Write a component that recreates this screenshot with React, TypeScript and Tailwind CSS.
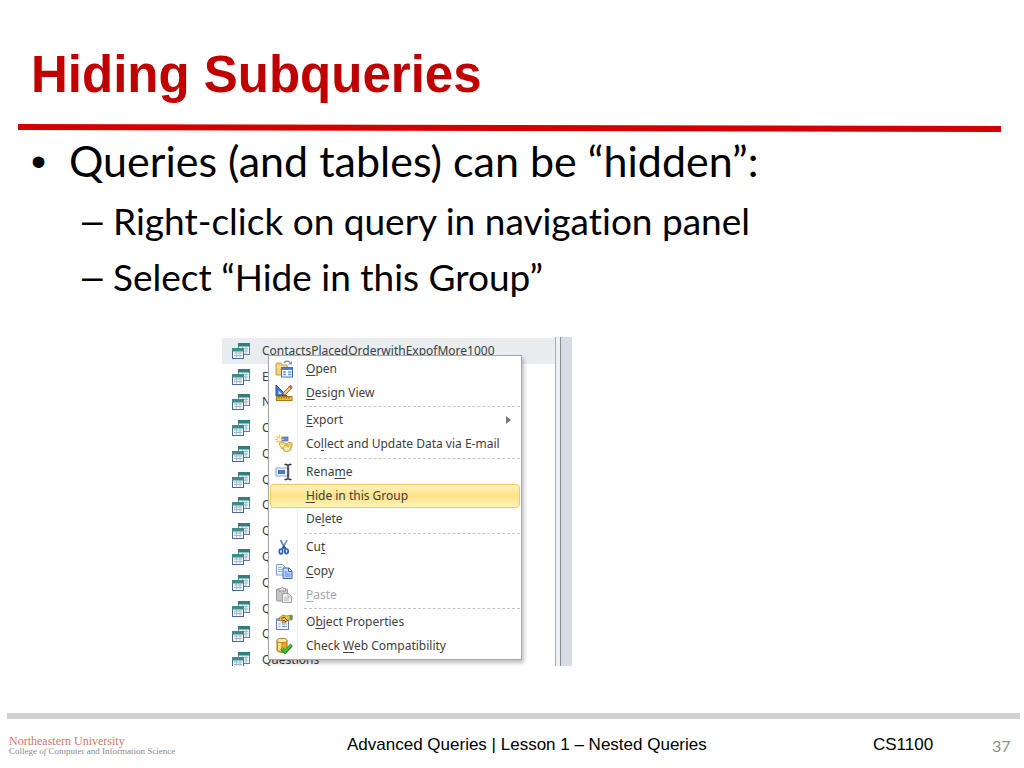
import type { ReactNode } from "react";

const TableIcon = () => (
  <svg viewBox="0 0 18 18" className="h-[18px] w-[18px] shrink-0">
    <rect x="6.500" y="1.500" width="11" height="11" fill="#eef4fa" stroke="#6482a8" />
    <path d="M8 6.500h8M8 9h8M10.500 5v7M14 5v7" stroke="#a3b8d2" />
    <rect x="6" y="1" width="12" height="3.500" fill="#2f807c" />
    <rect x="0.500" y="6.500" width="11" height="10" fill="#f4f8fc" stroke="#48699a" />
    <path d="M2 11h8M2 13.500h8M4.500 9.500v6M8 9.500v6" stroke="#a3b8d2" />
    <rect x="0" y="6" width="12" height="3.500" fill="#3d8d87" />
  </svg>
);

const OpenIcon = () => (
  <>
    <path d="M1 15V4l1-1h4l1.500 2H12v10z" fill="#f0d27c" stroke="#c39b3f" />
    <path d="M2 7h9" stroke="#fbeebb" />
    <path d="M9 3c1.500-2 4-2.500 6-.5" fill="none" stroke="#7d95b0" strokeWidth="1.300" />
    <path d="M13 4.500h4V1z" fill="#8198b2" />
    <rect x="6.500" y="7.500" width="11" height="9.500" fill="#fff" stroke="#3f6fc2" />
    <rect x="7" y="8" width="10" height="2" fill="#4b82d8" />
    <path d="M8 12h3M8 14.500h3M13 12h3.500M13 14.500h3.500" stroke="#6b97dc" strokeWidth="1.500" />
  </>
);

const DesignIcon = () => (
  <>
    <path d="M1 1v11h11z" fill="#3f76d6" stroke="#2452ad" />
    <path d="M3.500 6.500v3.500H7z" fill="#dce9fb" />
    <rect x="1.500" y="12.500" width="15.500" height="4" fill="#f1b934" stroke="#a87617" />
    <path d="M4 13v1.500M6.500 13v1.500M9 13v1.500M11.500 13v1.500M14 13v1.500" stroke="#7a5510" />
    <path d="M7.500 11.500l1-3 6-6 2 2-6 6z" fill="#f3c860" stroke="#74583a" strokeWidth=".8" />
    <path d="M14 2.500l1-1 2 1v1l-1 1z" fill="#d06562" stroke="#9c403e" strokeWidth=".7" />
    <path d="M7 12l.7-2 1.500 1.300z" fill="#3a3330" />
  </>
);

const CollectIcon = () => (
  <>
    <rect x="7" y="2" width="6" height="4" fill="#6890d2" stroke="#4468ad" strokeWidth=".7" />
    <path d="M4.500 0v9M0 4.500h9M1.500 1.500l6 6M7.500 1.500l-6 6" stroke="#edc64f" strokeWidth="1.200" />
    <circle cx="4.500" cy="4.500" r="1.700" fill="#fff7cf" />
    <path d="M4 9l3-2 5 2-1 4-4 1z" fill="#f4dc87" stroke="#bd993f" strokeWidth=".8" />
    <path d="M8 12l4-3 4 2v4l-4 2-3-1z" fill="#f6df91" stroke="#bd993f" strokeWidth=".8" />
    <path d="M11 10l3-3 3 1v4l-2 1z" fill="#edcb67" stroke="#bd993f" strokeWidth=".8" />
    <path d="M5 10l4 1M9.500 13l3 1 3-2" stroke="#fff7d5" fill="none" />
  </>
);

const RenameIcon = () => (
  <>
    <rect x="1" y="5" width="13" height="8" fill="#e9f1fc" stroke="#89a7d5" />
    <rect x="3" y="7" width="7" height="4" fill="#4778ca" />
    <path d="M9.500 1.500h2l1.500 1 1.500-1h2M13 2.500v13M9.500 16.500h2l1.500-1 1.500 1h2" fill="none" stroke="#303030" strokeWidth="1.500" />
  </>
);

const CutIcon = () => (
  <>
    <path d="M5.500 2l5 9.500" stroke="#6889b8" strokeWidth="1.800" />
    <path d="M12 2L7 11.500" stroke="#8397b3" strokeWidth="1.800" />
    <ellipse cx="6" cy="13.500" rx="1.700" ry="2.300" fill="none" stroke="#2860bd" strokeWidth="1.700" />
    <ellipse cx="11.500" cy="13.300" rx="1.700" ry="2.300" fill="none" stroke="#2860bd" strokeWidth="1.700" />
    <path d="M7.500 10.500l1.500-2 1.500 2" fill="none" stroke="#2b5098" strokeWidth="1.700" />
  </>
);

const CopyIcon = () => (
  <>
    <path d="M1.500 2.500h6l2.500 2.500v8H1.500z" fill="#edf4ff" stroke="#82a1d2" />
    <path d="M3 5.500h4M3 7.500h4M3 9.500h4" stroke="#9fb9df" />
    <path d="M8 6h6l3 3v7.500H8z" fill="#c8dcf9" stroke="#3868b8" />
    <path d="M13.500 6v3.500H17" fill="#fff" stroke="#3868b8" />
    <path d="M9.500 10h3M9.500 12h6M9.500 14h6" stroke="#5585d0" />
  </>
);

const PasteIcon = () => (
  <>
    <rect x="1.500" y="3" width="11" height="12" rx="1" fill="#c5c5c5" stroke="#9b9b9b" />
    <path d="M4 5V2.500h2c0-2 2.500-2 2.500 0h2V5z" fill="#e2e2e2" stroke="#999" />
    <path d="M7.500 7.500h6l3 3v6h-9z" fill="#efefef" stroke="#a0a0a0" />
    <path d="M13 7.500v3.500h3.500M9 12h5M9 14h5" fill="none" stroke="#b4b4b4" />
  </>
);

const PropertiesIcon = () => (
  <>
    <rect x="1.500" y="6" width="12" height="10.500" fill="#f1f6fd" stroke="#647fae" />
    <rect x="1.500" y="5.500" width="12" height="2.500" fill="#7d9ed2" />
    <path d="M3.500 11h2M7 11h5M3.500 13.500h2M7 13.500h5" stroke="#839cc4" />
    <path d="M4 5l4-3 3 1 6-1v5h-4l-3 3-1-1-2 1 1-3-3 1z" fill="#efc84d" stroke="#977329" strokeWidth=".8" />
    <path d="M6 6l3-2 4 4M8 8l1-1 2 2" fill="none" stroke="#4d422c" />
    <path d="M14.500 2.500h3v4h-3z" fill="#5d9661" />
  </>
);

const CompatIcon = () => (
  <>
    <path d="M2 3.500v9.500c0 3 10 3 10 0V3.500z" fill="#e7a52e" stroke="#a66b19" />
    <path d="M3 5v8c1 1 2 1 3 1.200V5z" fill="#ffe17d" />
    <ellipse cx="7" cy="3.500" rx="5" ry="2.200" fill="#ffe993" stroke="#b67b22" />
    <path d="M6.500 11.500l3.500 3.500 6.500-7" fill="none" stroke="#168020" strokeWidth="3.500" />
    <path d="M6.500 11l3.500 3.500 6.500-7" fill="none" stroke="#4fbe3e" strokeWidth="2" />
  </>
);

type Item = {
  before?: string;
  hot: string;
  after: string;
  icon?: ReactNode;
  submenu?: boolean;
  active?: boolean;
  disabled?: boolean;
};

const groups: Item[][] = [
  [
    { hot: "O", after: "pen", icon: <OpenIcon /> },
    { hot: "D", after: "esign View", icon: <DesignIcon /> },
  ],
  [
    { hot: "E", after: "xport", submenu: true },
    { before: "Co", hot: "l", after: "lect and Update Data via E-mail", icon: <CollectIcon /> },
  ],
  [
    { before: "Rena", hot: "m", after: "e", icon: <RenameIcon /> },
    { hot: "H", after: "ide in this Group", active: true },
    { before: "De", hot: "l", after: "ete" },
  ],
  [
    { before: "Cu", hot: "t", after: "", icon: <CutIcon /> },
    { hot: "C", after: "opy", icon: <CopyIcon /> },
    { hot: "P", after: "aste", icon: <PasteIcon />, disabled: true },
  ],
  [
    { before: "O", hot: "b", after: "ject Properties", icon: <PropertiesIcon /> },
    { before: "Check ", hot: "W", after: "eb Compatibility", icon: <CompatIcon /> },
  ],
];

const queries = [
  "ContactsPlacedOrderwithExpofMore1000",
  "E", "N", "C", "Q", "Q", "Q", "Q", "Q", "Q", "Q", "Q",
  "Questions",
];

function MenuItem({ item }: { item: Item }) {
  return (
    <button
      type="button"
      role="menuitem"
      disabled={item.disabled}
      className={`flex min-h-0 w-full flex-1 items-center rounded-sm border text-left ${
        item.active
          ? "border-[#efcb58] bg-linear-to-b from-[#fff3bd] via-[#fde184] to-[#fff4bd]"
          : "border-transparent"
      } ${item.disabled ? "text-[#a8a8a8]" : "text-[#404040]"}`}
    >
      <span className="flex w-[35px] shrink-0 pl-1">
        {item.icon && (
          <svg viewBox="0 0 18 18" className="h-[18px] w-[18px]">{item.icon}</svg>
        )}
      </span>
      <span className="flex-1 whitespace-pre">
        {item.before}
        <span className="underline underline-offset-2">{item.hot}</span>
        {item.after}
      </span>
      {item.submenu && (
        <svg viewBox="0 0 5 8" className="mr-2 h-2 w-[5px]">
          <path d="M0 0l5 4-5 4z" fill="#777" />
        </svg>
      )}
    </button>
  );
}

function ContextMenu() {
  return (
    <div
      role="menu"
      className="absolute top-[18px] left-[46px] flex h-[305px] w-[254px] flex-col border border-[#a5a8ad] bg-white bg-linear-to-r from-transparent from-[28px] via-[#dfe2e5] via-[28px] to-transparent to-[29px] p-px shadow-[2px_3px_4px_rgba(0,0,0,0.25)]"
    >
      {groups.map((group, i) => (
        <div key={i} className="contents">
          {i > 0 && (
            <div role="separator" className="flex h-1 shrink-0 items-center pl-[34px]">
              <div className="w-full border-t border-dashed border-[#c4c6c8]" />
            </div>
          )}
          {group.map((item) => (
            <MenuItem key={item.hot + item.after} item={item} />
          ))}
        </div>
      ))}
    </div>
  );
}

function NavigationPane() {
  return (
    <div className="relative ml-[222px] flex h-[329px] w-[350px] overflow-hidden font-['Noto_Sans',sans-serif] text-[12px] leading-4 text-[#404040]">
      <ul className="flex h-[336px] flex-1 flex-col pt-px">
        {queries.map((name, i) => (
          <li
            key={i}
            className={`flex min-h-0 flex-1 items-center gap-3 pl-[10px] ${i === 0 ? "bg-[#e9edf0]" : ""}`}
          >
            <TableIcon />
            <span>{name}</span>
          </li>
        ))}
      </ul>
      <div className="w-[6px] border-x border-l-[#a5adb5] border-r-[#848e98] bg-[#eef1f4]" />
      <div className="w-[11px] bg-[#d8dde3]" />
      <ContextMenu />
    </div>
  );
}

export default function App() {
  return (
    <main className="flex min-h-screen flex-col bg-white font-['Liberation_Sans',Arial,sans-serif] text-black">
      <h1 className="pt-[45px] pl-[31px] text-[51px] leading-[60px] font-bold text-[#c00000]">
        Hiding Subqueries
      </h1>
      <svg
        viewBox="0 0 983 8"
        preserveAspectRatio="none"
        className="mt-[19px] mr-[23px] ml-[18px] h-2"
      >
        <path d="M0 0L983 2V8L0 6z" fill="#d40000" />
      </svg>

      <ul className="pt-[3px] font-['Lato',sans-serif] [font-variant-ligatures:none]">
        <li className="flex pl-[31px] text-[43px] leading-[52px]">
          <span className="w-[38px] font-['Liberation_Sans',sans-serif]">•</span>
          <span>Queries (and tables) can be “hidden”:</span>
        </li>
        <li>
          <ul className="pt-[6px] text-[37px] leading-[56px]">
            <li className="flex pl-[82px]">
              <span className="w-[31px] font-['Liberation_Sans',sans-serif]">–</span>
              <span>Right-click on query in navigation panel</span>
            </li>
            <li className="flex pl-[82px]">
              <span className="w-[31px] font-['Liberation_Sans',sans-serif]">–</span>
              <span>Select “Hide in this Group”</span>
            </li>
          </ul>
        </li>
      </ul>

      <div className="mt-8">
        <NavigationPane />
      </div>

      <footer className="mt-auto pr-1 pl-[7px]">
        <div className="h-[6px] bg-[#d0d2d1]" />
        <div className="flex h-[49px] items-start text-[17px] leading-5">
          <div className="w-[340px] pt-[17px] pl-[2px] font-['Liberation_Serif',serif]">
            <div className="text-[12px] leading-[11px] text-[#cf7770]">Northeastern University</div>
            <div className="text-[9px] leading-[8px] text-[#8c8c8c]">
              College <i>of</i> Computer and Information Science
            </div>
          </div>
          <div className="flex-1 pt-4">Advanced Queries | Lesson 1 – Nested Queries</div>
          <div className="w-[119px] pt-4">CS1100</div>
          <div className="w-[28px] pt-[17px] font-['Lato',sans-serif] text-[16px] text-[#8c8c8c]">37</div>
        </div>
      </footer>
    </main>
  );
}
